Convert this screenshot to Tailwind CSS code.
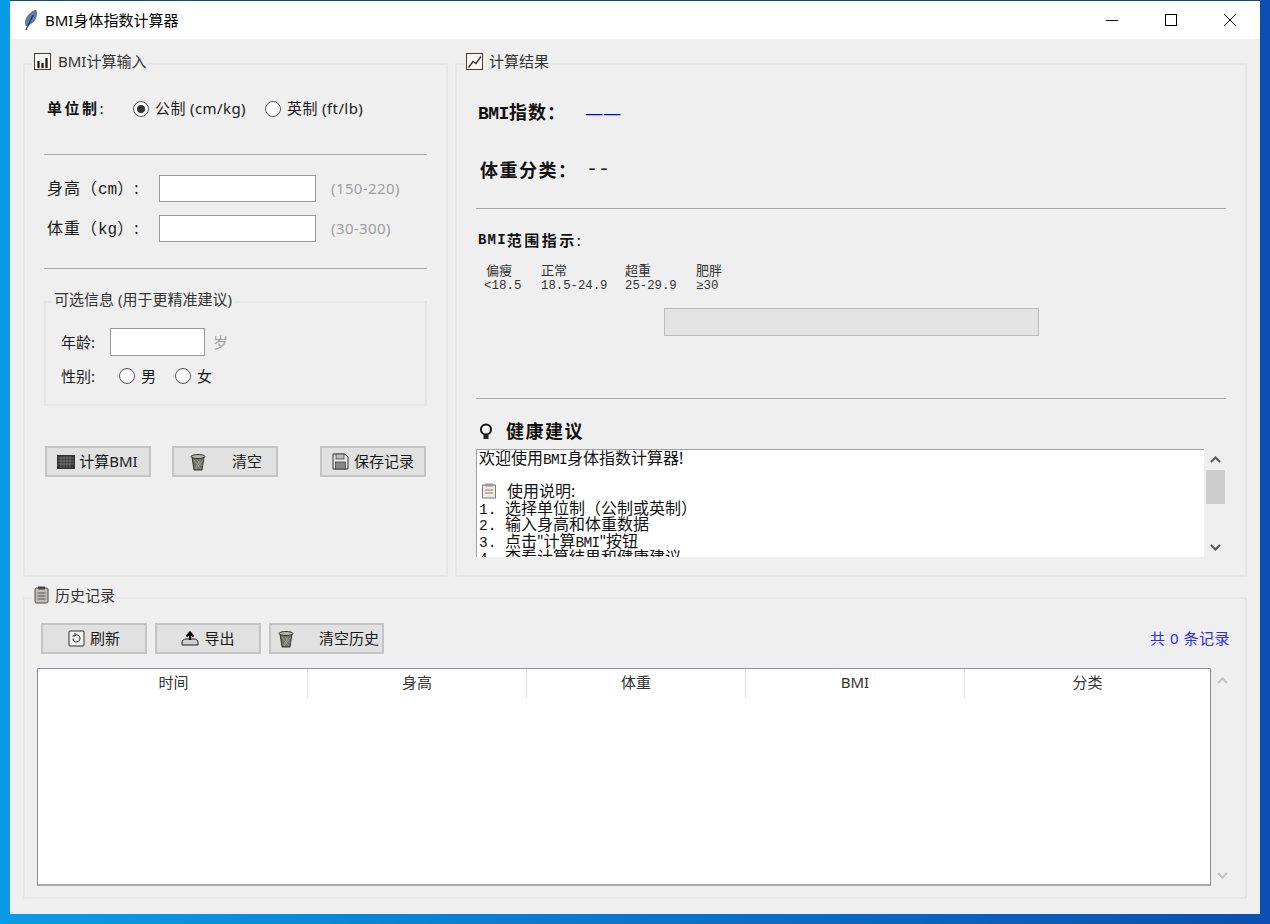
<!DOCTYPE html>
<html lang="zh">
<head>
<meta charset="utf-8">
<title>BMI身体指数计算器</title>
<script src="https://cdn.jsdelivr.net/npm/@tailwindcss/browser@4"></script>
</head>
<body class="w-[1270px] h-[924px] overflow-hidden bg-[linear-gradient(90deg,#0a9be8_0px,#0a9be8_10px,#0a4fb2_1260px)]">
<div class="ml-[10px] w-[1250px] h-[914px] flex flex-col font-['Noto_Sans','Noto_Sans_CJK_SC',sans-serif] text-[#1a1a1a] text-[15px] bg-[#efefef] border-t border-[#0b4f80]">

    <!-- title bar -->
    <div class="h-[38px] bg-white flex items-center shrink-0">
        <svg class="ml-[13px] w-[16px] h-[22px]" viewBox="0 0 16 22"><path d="M3 17 C1 11 5 4 13 1 C15 8 11 14 5 16 Z" fill="#5f7fae" stroke="#2c4468" stroke-width=".6"/><path d="M3 21 L10 6" stroke="#1c2f52" stroke-width="1.200"/></svg>
        <span class="ml-[6px] text-black">BMI身体指数计算器</span>
        <div class="ml-auto flex items-center">
            <svg class="w-[12px] h-[12px] mr-[47px]" viewBox="0 0 12 12"><path d="M0 6.500H12" stroke="#000"/></svg>
            <svg class="w-[12px] h-[12px] mr-[47px]" viewBox="0 0 12 12"><rect x=".5" y=".5" width="11" height="11" fill="none" stroke="#000"/></svg>
            <svg class="w-[12px] h-[12px] mr-[24px]" viewBox="0 0 12 12"><path d="M0 0L12 12M12 0L0 12" stroke="#000"/></svg>
        </div>
    </div>

    <div class="flex gap-[7px] pl-[13px] pt-[24px] shrink-0">
        <!-- input group -->
        <div class="relative w-[425px] h-[514px] border-2 border-[#e6e6e6] px-[19px]">
            <div class="absolute left-[7px] top-[-14px] h-[20px] pl-[2px] pr-[1px] flex items-center gap-[7px] bg-[#efefef] text-[#333]">
                <svg class="w-[17px] h-[17px]" viewBox="0 0 17 17"><rect x=".5" y=".5" width="16" height="16" fill="#f7f7f7" stroke="#4a3d30"/><path d="M4.500 15V8M8.500 15V10M12.500 15V5" stroke="#111" stroke-width="2.200"/></svg>
                <span>BMI计算输入</span>
            </div>

            <div class="mt-[31px] h-[24px] flex items-center pl-[3px]">
                <span class="w-[86px] text-[15px] font-bold tracking-[2.5px] text-[#111]">单位制<span class="font-normal">:</span></span>
                <span class="mt-[2px] w-[16px] h-[16px] rounded-full border border-[#555] bg-white flex items-center justify-center"><span class="w-[8px] h-[8px] rounded-full bg-[#333]"></span></span>
                <span class="ml-[6px] w-[110px] tracking-[.4px]">公制 (cm/kg)</span>
                <span class="mt-[2px] w-[16px] h-[16px] rounded-full border border-[#555] bg-white"></span>
                <span class="ml-[6px] tracking-[.4px]">英制 (ft/lb)</span>
            </div>

            <div class="mt-[34px] h-px bg-[#a8a8a8]"></div>

            <div class="mt-[20px] h-[27px] flex items-center pl-[3px]">
                <span class="w-[112px] text-[16px] tracking-[1px] whitespace-nowrap">身高（<span class="font-['Liberation_Mono'] tracking-normal">cm</span>）:</span>
                <div class="w-[157px] h-[27px] bg-white border border-[#9a9a9a]"></div>
                <span class="ml-[15px] text-[#a0a0a0] tracking-[.4px]">(150-220)</span>
            </div>
            <div class="mt-[13px] h-[27px] flex items-center pl-[3px]">
                <span class="w-[112px] text-[16px] tracking-[1px] whitespace-nowrap">体重（<span class="font-['Liberation_Mono'] tracking-normal">kg</span>）:</span>
                <div class="w-[157px] h-[27px] bg-white border border-[#9a9a9a]"></div>
                <span class="ml-[15px] text-[#a0a0a0] tracking-[.4px]">(30-300)</span>
            </div>

            <div class="mt-[26px] h-px bg-[#a8a8a8]"></div>

            <!-- optional info -->
            <div class="relative mt-[32px] h-[105px] border-2 border-[#e6e6e6] px-[15px]">
                <span class="absolute left-[6px] top-[-14px] px-[2px] h-[20px] flex items-center bg-[#efefef] text-[#333] whitespace-nowrap">可选信息 (用于更精准建议)</span>
                <div class="mt-[25px] h-[28px] flex items-center">
                    <span class="w-[49px]">年龄:</span>
                    <div class="w-[95px] h-[28px] bg-white border border-[#9a9a9a]"></div>
                    <span class="ml-[8px] text-[#a0a0a0]">岁</span>
                </div>
                <div class="mt-[9px] h-[22px] flex items-center">
                    <span class="w-[58px]">性别:</span>
                    <span class="w-[16px] h-[16px] rounded-full border border-[#555] bg-white"></span>
                    <span class="ml-[6px] w-[34px]">男</span>
                    <span class="w-[16px] h-[16px] rounded-full border border-[#555] bg-white"></span>
                    <span class="ml-[6px]">女</span>
                </div>
            </div>

            <div class="mt-[40px] h-[31px] flex ml-px">
                <button class="w-[106px] h-[31px] border-2 border-[#c4c4c4] bg-[#e1e1e1] flex items-center justify-center gap-[4px] whitespace-nowrap">
                    <svg class="-ml-px w-[18px] h-[14px]" viewBox="0 0 18 14"><rect width="18" height="14" fill="#333"/><path d="M1 3H17M1 6H17M1 9H17M4 1V13M7 1V13M10 1V13M13 1V13" stroke="#999" stroke-width=".6"/></svg>
                    <span>计算BMI</span>
                </button>
                <button class="ml-[21px] w-[106px] h-[31px] border-2 border-[#c4c4c4] bg-[#e1e1e1] flex items-center pl-[15px]">
                    <svg class="w-[18px] h-[18px]" viewBox="0 0 18 18"><path d="M3 4L5 17H13L15 4Z" fill="#6e6e6a" stroke="#333"/><path d="M5 7L12 16M8 7L13.500 13M11 7L6 16M14 7L7 16" stroke="#b8b8b2" stroke-width=".6"/><ellipse cx="9" cy="3.500" rx="7" ry="2" fill="#b5b5ae" stroke="#333"/></svg>
                    <span class="ml-[25px]">清空</span>
                </button>
                <button class="ml-[42px] w-[106px] h-[31px] border-2 border-[#c4c4c4] bg-[#e1e1e1] flex items-center justify-center gap-[5px] whitespace-nowrap">
                    <svg class="w-[17px] h-[17px]" viewBox="0 0 17 17"><path d="M1 1H13L16 4V16H1Z" fill="#e8e8e8" stroke="#333"/><rect x="4" y="1" width="8" height="5" fill="#bbb" stroke="#333" stroke-width=".7"/><rect x="3.500" y="9" width="10" height="7" fill="#888" stroke="#333" stroke-width=".7"/></svg>
                    <span>保存记录</span>
                </button>
            </div>
        </div>

        <!-- result group -->
        <div class="relative w-[792px] h-[514px] border-2 border-[#e6e6e6] px-[19px]">
            <div class="absolute left-[8px] top-[-14px] h-[20px] pl-[2px] pr-[1px] flex items-center gap-[6px] bg-[#efefef] text-[#333]">
                <svg class="-ml-px w-[17px] h-[17px]" viewBox="0 0 17 17"><rect x=".5" y=".5" width="16" height="16" fill="#f7f7f7" stroke="#4a3d30"/><path d="M2.500 14.500L7 8.500L10 10.500L15 3.500" fill="none" stroke="#333" stroke-width="1.300"/></svg>
                <span>计算结果</span>
            </div>

            <div class="mt-[35px] h-[26px] flex items-center pl-[2px] text-[18px] font-bold text-[#111]">
                <span class="w-[107px] whitespace-nowrap tracking-[1px]"><span class="font-['Liberation_Mono'] tracking-[-.5px]">BMI</span>指数：</span>
                <span class="text-[18px] font-normal text-[#0000ff] leading-none">——</span>
            </div>
            <div class="mt-[31px] h-[26px] flex items-center pl-[4px]">
                <span class="w-[106px] text-[18px] font-bold tracking-[1.5px] text-[#111] whitespace-nowrap">体重分类：</span>
                <span class="font-['Liberation_Mono'] text-[20px] leading-none text-[#222]">--</span>
            </div>

            <div class="mt-[25px] h-px bg-[#a8a8a8]"></div>

            <div class="mt-[21px] h-[20px] flex items-center pl-[2px] text-[15px] font-bold tracking-[2.500px] text-[#111]">
                <span class="font-['Liberation_Mono'] text-[14px] tracking-[1.200px]">BMI</span>范围指示<span class="font-normal">:</span>
            </div>

            <div class="mt-[13px] h-[30px] flex pl-[8px] text-[13px] leading-[14px] text-[#333]">
                <div class="w-[57px]"><div class="pl-[2px]">偏瘦</div><div class="mt-[2px] font-['Liberation_Mono'] text-[12.500px]">&lt;18.5</div></div>
                <div class="w-[84px]"><div>正常</div><div class="mt-[2px] font-['Liberation_Mono'] text-[12.300px]">18.5-24.9</div></div>
                <div class="w-[71px]"><div>超重</div><div class="mt-[2px] font-['Liberation_Mono'] text-[12.300px]">25-29.9</div></div>
                <div><div>肥胖</div><div class="mt-[2px] font-['Liberation_Mono'] text-[12.500px]">≥30</div></div>
            </div>

            <div class="mt-[15px] ml-[188px] w-[375px] h-[28px] bg-[#e3e3e3] border border-[#bcbcbc]"></div>

            <div class="mt-[62px] h-px bg-[#a8a8a8]"></div>

            <div class="mt-[21px] h-[22px] flex items-center pl-[3px]">
                <svg class="w-[14px] h-[17px]" viewBox="0 0 14 17"><circle cx="7" cy="6.500" r="5" fill="#fff" stroke="#111" stroke-width="2"/><rect x="4.500" y="12" width="5" height="4" fill="#222"/></svg>
                <span class="ml-[13px] text-[18px] font-bold tracking-[1.500px] text-[#111]">健康建议</span>
            </div>

            <div class="mt-[7px] h-[108px] flex">
                <div class="w-[728px] h-[108px] bg-white border-t border-l border-[#a0a0a0] overflow-hidden pl-[2px] text-[16px] leading-[16px] text-[#111]">
                    <div class="h-[16.500px] flex items-baseline"><span>欢迎使用</span><span class="font-['Liberation_Mono'] text-[14.500px] tracking-[-.7px]">BMI</span><span>身体指数计算器!</span></div>
                    <div class="h-[16.500px]"></div>
                    <div class="h-[16.500px] flex items-center"><svg class="ml-[2px] w-[16px] h-[16px]" viewBox="0 0 16 16"><rect x="1.500" y="2" width="13" height="13" fill="#f3ead8" stroke="#6b7fa8"/><rect x="4" y=".5" width="8" height="3" fill="#999"/><path d="M4 7H12M4 10H12" stroke="#888"/></svg><span class="ml-[10px]">使用说明:</span></div>
                    <div class="h-[16.500px] flex items-baseline"><span class="w-[26px] font-['Liberation_Mono'] text-[14.500px]">1.</span><span>选择单位制（公制或英制）</span></div>
                    <div class="h-[16.500px] flex items-baseline"><span class="w-[26px] font-['Liberation_Mono'] text-[14.500px]">2.</span><span>输入身高和体重数据</span></div>
                    <div class="h-[16.500px] flex items-baseline"><span class="w-[26px] font-['Liberation_Mono'] text-[14.500px]">3.</span><span>点击"计算</span><span class="font-['Liberation_Mono'] text-[14.500px] tracking-[-.7px]">BMI</span><span>"按钮</span></div>
                    <div class="h-[16.500px] flex items-baseline"><span class="w-[26px] font-['Liberation_Mono'] text-[14.500px]">4.</span><span>查看计算结果和健康建议</span></div>
                </div>
                <div class="ml-[2px] w-[19px] h-[108px] flex flex-col items-center">
                    <svg class="mt-[7px] w-[11px] h-[8px]" viewBox="0 0 11 8"><path d="M1 6L5.500 1.500L10 6" fill="none" stroke="#555" stroke-width="2"/></svg>
                    <div class="mt-[6px] w-[19px] h-[34px] bg-[#cdcdcd]"></div>
                    <svg class="mt-[39px] w-[11px] h-[8px]" viewBox="0 0 11 8"><path d="M1 2L5.500 6.500L10 2" fill="none" stroke="#555" stroke-width="2"/></svg>
                </div>
            </div>
        </div>
    </div>

    <!-- history -->
    <div class="relative ml-[13px] mt-[20px] w-[1224px] h-[302px] border-2 border-[#e6e6e6] pl-[12px]">
        <div class="absolute left-[7px] top-[-14px] h-[20px] pl-[2px] pr-[1px] flex items-center gap-[6px] bg-[#efefef] text-[#333]">
            <svg class="w-[15px] h-[18px]" viewBox="0 0 15 18"><rect x="1" y="2" width="13" height="15" rx="1.500" fill="#bdbdb8" stroke="#5a4a38"/><rect x="4" y="0.500" width="7" height="3" fill="#444"/><path d="M3.500 7H11.500M3.500 10H11.500M3.500 13H11.500" stroke="#555"/></svg>
            <span>历史记录</span>
        </div>

        <div class="mt-[24px] h-[31px] flex items-center pl-[4px] pr-[15px]">
            <button class="w-[106px] h-[31px] border-2 border-[#c4c4c4] bg-[#e1e1e1] flex items-center justify-center gap-[5px]">
                <svg class="w-[17px] h-[17px]" viewBox="0 0 17 17"><rect x="1" y="1" width="15" height="15" rx="1" fill="#f2f2f2" stroke="#333"/><path d="M5 8.500A3.500 3.500 0 1 0 7 5.300M7 3V6H4.500" fill="none" stroke="#222"/></svg>
                <span>刷新</span>
            </button>
            <button class="ml-[8px] w-[106px] h-[31px] border-2 border-[#c4c4c4] bg-[#e1e1e1] flex items-center justify-center gap-[5px]">
                <svg class="w-[18px] h-[15px]" viewBox="0 0 18 15"><path d="M1 12C1 9 3 8 5 8H13C15 8 17 9 17 12V14H1Z" fill="#cfcfcf" stroke="#222"/><path d="M9 9V2M5.500 5.500L9 1.500L12.500 5.500" fill="none" stroke="#000" stroke-width="2.200"/></svg>
                <span>导出</span>
            </button>
            <button class="ml-[8px] w-[115px] h-[31px] border-2 border-[#c4c4c4] bg-[#e1e1e1] flex items-center pl-[6px]">
                <svg class="w-[18px] h-[18px]" viewBox="0 0 18 18"><path d="M3 4L5 17H13L15 4Z" fill="#6e6e6a" stroke="#333"/><path d="M5 7L12 16M8 7L13.500 13M11 7L6 16M14 7L7 16" stroke="#b8b8b2" stroke-width=".6"/><ellipse cx="9" cy="3.500" rx="7" ry="2" fill="#b5b5ae" stroke="#333"/></svg>
                <span class="ml-[24px] whitespace-nowrap">清空历史</span>
            </button>
            <span class="ml-auto text-[#2a2af0] tracking-[.5px]">共 0 条记录</span>
        </div>

        <div class="mt-[14px] flex">
            <div class="w-[1174px] h-[218px] bg-white border border-[#8b8f99] border-b-2 border-b-[#a8a8a8]">
                <div class="grid grid-cols-[270px_219px_219px_219px_1fr] h-[29px] text-center text-[#333]">
                    <div class="border-r border-[#e4e4e4] leading-[27px] pl-[2px]">时间</div>
                    <div class="border-r border-[#e4e4e4] leading-[27px]">身高</div>
                    <div class="border-r border-[#e4e4e4] leading-[27px]">体重</div>
                    <div class="border-r border-[#e4e4e4] leading-[27px]">BMI</div>
                    <div class="leading-[27px]">分类</div>
                </div>
            </div>
            <div class="ml-[2px] w-[19px] h-[218px] flex flex-col items-center">
                <svg class="mt-[9px] w-[11px] h-[8px]" viewBox="0 0 11 8"><path d="M1 6L5.500 1.500L10 6" fill="none" stroke="#c4c4c4" stroke-width="2"/></svg>
                <svg class="mt-auto mb-[7px] w-[11px] h-[8px]" viewBox="0 0 11 8"><path d="M1 2L5.500 6.500L10 2" fill="none" stroke="#c4c4c4" stroke-width="2"/></svg>
            </div>
        </div>
    </div>
</div>
</body>
</html>
